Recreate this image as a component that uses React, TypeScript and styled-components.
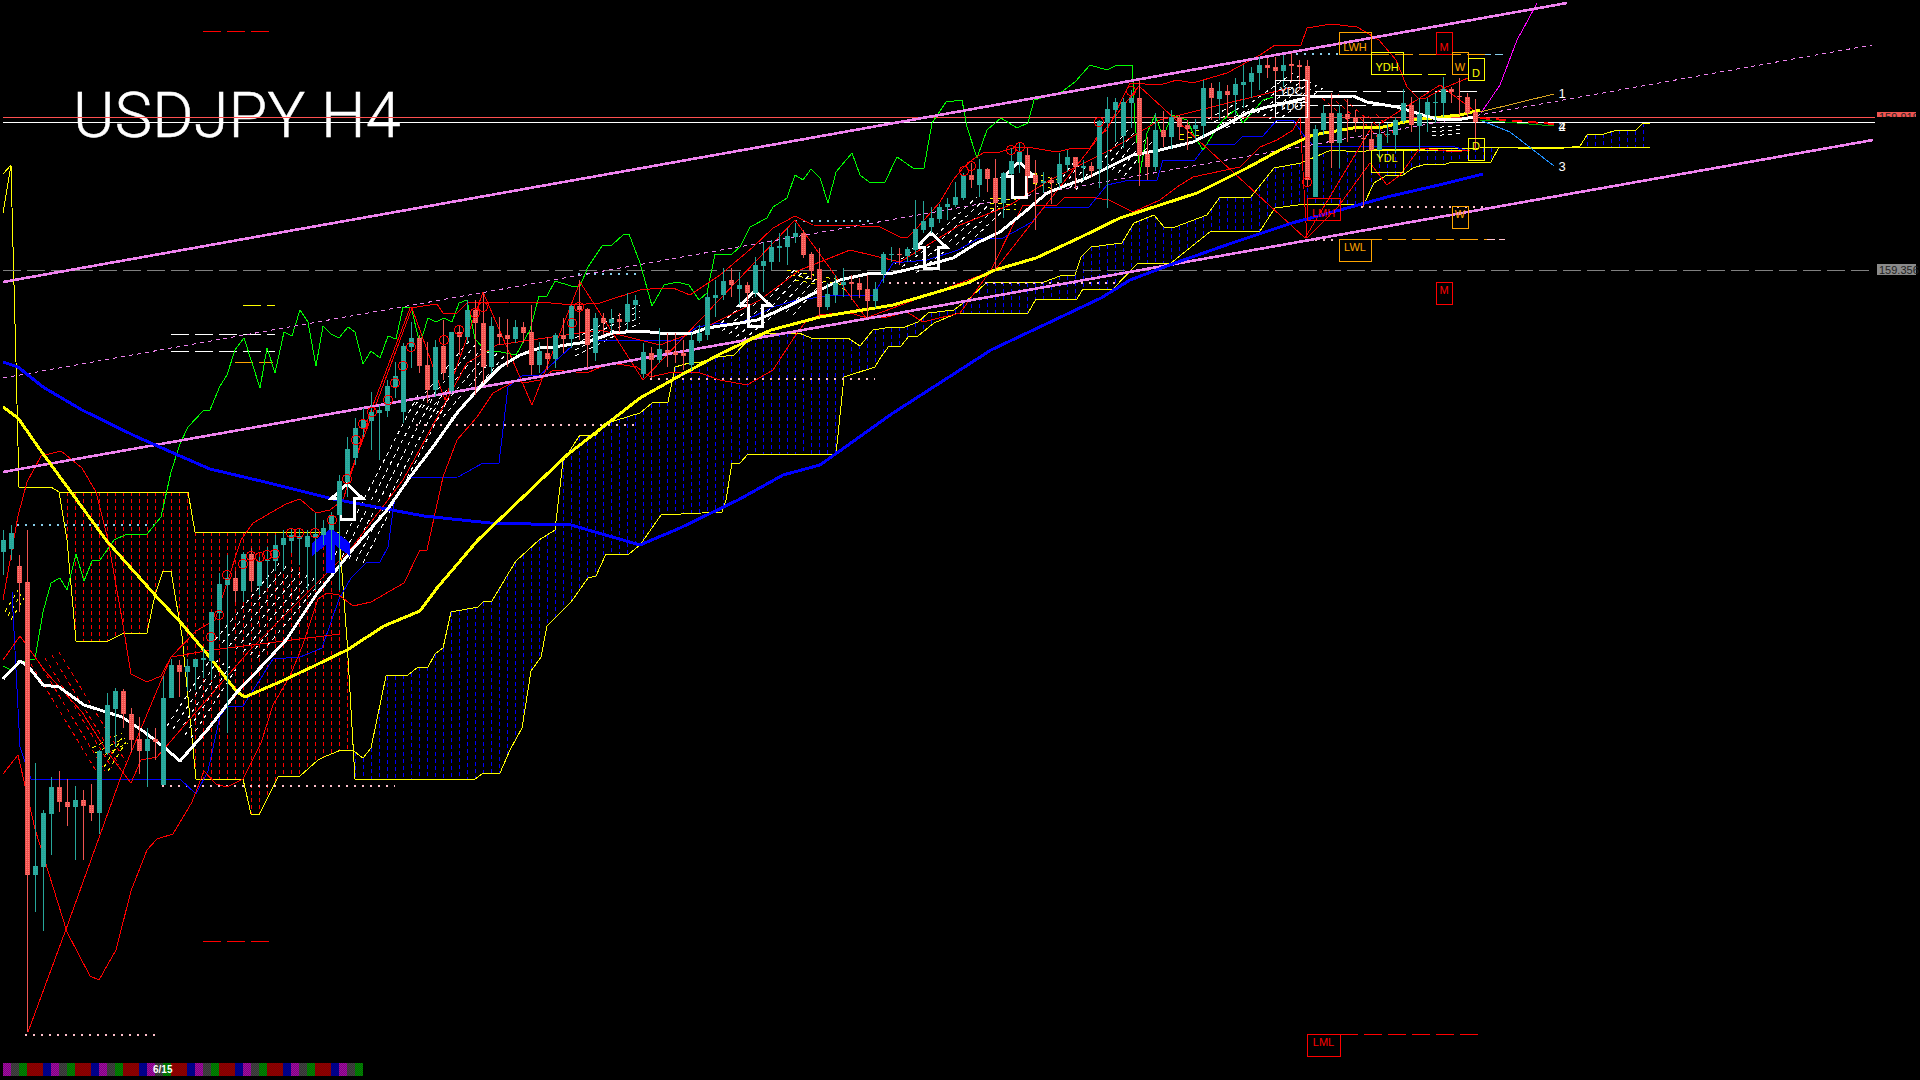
import styled, { createGlobalStyle } from 'styled-components';

const Global = createGlobalStyle`
  html, body { margin: 0; padding: 0; background: #000; }
`;

const Page = styled.div`
  position: relative;
  width: 1920px;
  height: 1080px;
  background: #000;
  overflow: hidden;
`;

const Title = styled.h1`
  position: absolute;
  left: 73px;
  top: 79px;
  margin: 0;
  font: 300 63px/74px Roboto, "Liberation Sans", sans-serif;
  letter-spacing: 0.2px;
  -webkit-text-stroke: 0.5px #fff;
  color: #fff;
  white-space: nowrap;
`;

const Chart = styled.svg`
  position: absolute;
  inset: 0;
  shape-rendering: crispEdges;
`;

const Trace = styled.polyline<{ $c: string; $w?: number; $dash?: string }>`
  fill: none;
  stroke: ${(p) => p.$c};
  stroke-width: ${(p) => p.$w ?? 1};
  stroke-dasharray: ${(p) => p.$dash ?? 'none'};
  stroke-linejoin: round;
`;

const Wick = styled.line<{ $c: string }>`
  stroke: ${(p) => p.$c};
  stroke-width: 1;
`;

const Ring = styled.circle`
  fill: none;
  stroke: #f00;
  stroke-width: 1;
`;

const Outline = styled.polygon`
  fill: none;
  stroke: #fff;
  stroke-width: 3;
  stroke-linejoin: miter;
`;

const BlueArrow = styled.polygon`
  fill: #00f;
`;

const LabelBox = styled.rect<{ $c: string }>`
  fill: none;
  stroke: ${(p) => p.$c};
  stroke-width: 1;
`;

const LabelText = styled.text<{ $c: string }>`
  fill: ${(p) => p.$c};
  font: 11px "Liberation Sans", Arial, sans-serif;
  text-anchor: middle;
`;

const FanNumber = styled.text`
  fill: #fff;
  font: 13px "Liberation Sans", Arial, sans-serif;
  text-anchor: middle;
`;

const TagText = styled.text`
  fill: #222;
  font: 11px "Liberation Sans", Arial, sans-serif;
`;

const Bar = styled.div`
  position: absolute;
  left: 3px;
  top: 1063px;
  display: flex;
  height: 13px;
`;

const Seg = styled.div<{ $c: string; $d: string; $w: number }>`
  width: ${(p) => p.$w}px;
  background: repeating-conic-gradient(${(p) => p.$c} 0 25%, ${(p) => p.$d} 0 50%) 0 0 / 2px 2px;
`;

const BarLabel = styled.span`
  position: absolute;
  left: 150px;
  top: 0;
  font: bold 10px/13px "Liberation Sans", Arial, sans-serif;
  color: #fff;
`;

const TEAL = '#26a69a';
const RED = '#ef5350';
const VIOLET = '#ee82ee';
const PINK = '#ffc0cb';
const SKY = '#87ceeb';
const ORANGE = '#ffa500';

// top, bottom, wick top, wick bottom, 1 = up. x = 3 + 8 * index
const candles: number[][] = [
  [540,552,530,575,1],[533,549,525,560,1],[566,583,555,612,0],[582,875,530,1032,0],[866,875,763,912,1],
  [813,867,810,931,1],[787,814,777,855,1],[787,802,771,812,0],[802,807,779,826,0],[800,807,786,860,1],
  [800,806,790,860,0],[805,813,784,821,0],[751,813,750,834,1],[705,753,693,755,1],[691,709,688,747,1],
  [691,714,689,728,0],[714,740,708,752,0],[739,751,717,774,0],[739,751,728,787,1],[739,742,728,760,0],
  [698,785,676,785,1],[665,698,659,698,1],[665,672,660,697,0],[666,672,659,691,1],[659,667,659,690,1],
  [658,660,648,678,1],[612,661,612,680,1],[584,613,573,640,1],[578,585,555,733,1],[578,591,571,602,0],
  [554,591,552,602,1],[554,581,548,592,0],[561,586,557,595,1],[560,561,547,588,1],[545,561,535,571,1],
  [538,545,530,571,1],[535,541,528,553,1],[536,539,528,565,1],[536,547,530,590,1],[534,538,513,590,1],
  [528,535,520,545,1],[515,530,512,560,1],[481,515,475,590,1],[449,482,437,497,1],[428,458,418,465,1],
  [420,428,408,437,1],[412,421,392,450,1],[410,413,405,460,1],[386,411,380,417,1],[376,387,362,398,1],
  [346,412,343,423,1],[338,347,322,368,1],[338,366,335,373,0],[365,390,342,403,0],[347,390,340,397,1],
  [346,373,320,380,0],[332,391,332,393,1],[332,337,325,355,0],[310,337,300,343,1],[310,323,300,395,0],
  [323,367,292,383,0],[326,367,317,373,1],[334,337,317,345,0],[335,339,319,367,0],[327,339,320,343,1],
  [327,333,322,343,0],[332,365,305,375,0],[351,365,342,373,1],[353,359,337,370,0],[335,359,333,368,1],
  [335,339,318,353,0],[306,339,305,348,1],[306,310,280,340,0],[309,345,308,368,0],[318,353,313,361,1],
  [318,323,313,335,0],[319,323,309,333,1],[319,322,313,332,0],[304,322,293,330,1],[300,305,295,320,1],
  [352,374,343,378,1],[353,360,347,378,0],[349,360,328,363,1],[350,353,333,367,0],[352,355,333,363,0],
  [353,356,340,370,0],[340,365,333,370,1],[333,341,325,343,1],[297,335,293,340,1],[295,298,280,317,1],
  [281,295,268,300,1],[280,285,268,297,0],[285,289,272,305,1],[285,293,282,307,0],[265,293,257,297,1],
  [261,266,242,292,1],[247,262,240,270,1],[246,248,233,262,1],[236,247,228,265,1],[233,237,223,243,1],
  [233,255,230,258,0],[254,271,252,280,0],[269,307,248,317,0],[294,307,283,310,1],[283,295,275,303,1],
  [282,285,268,297,1],[282,284,275,300,0],[283,290,278,298,0],[289,301,275,318,0],[289,301,282,308,1],
  [254,274,252,283,1],[254,255,247,262,1],[254,255,248,265,0],[249,256,247,262,1],[229,250,200,255,1],
  [221,230,201,233,1],[218,227,207,233,1],[207,219,204,223,1],[204,207,198,220,1],[197,205,182,207,1],
  [175,198,173,200,1],[175,180,163,188,0],[169,185,159,197,1],[169,179,168,192,0],[178,203,159,270,0],
  [173,203,172,218,1],[161,174,148,175,1],[152,162,143,173,1],[155,176,148,193,0],[175,183,160,230,0],
  [181,183,172,193,1],[180,183,177,204,0],[164,183,153,188,1],[157,165,150,172,1],[157,167,157,189,0],
  [166,168,160,180,1],[166,171,162,177,0],[121,169,120,188,1],[109,123,97,208,1],[102,110,98,142,1],
  [102,136,98,148,1],[98,103,90,128,1],[98,155,80,186,0],[154,167,137,180,0],[130,167,113,171,1],
  [130,137,111,147,0],[117,137,110,149,1],[117,127,115,140,0],[125,129,120,150,0],[125,129,119,140,1],
  [88,126,80,137,1],[88,98,83,120,0],[91,99,82,120,1],[91,95,85,118,0],[84,95,78,115,1],
  [82,85,65,108,1],[73,82,67,98,1],[65,73,57,90,1],[65,68,58,78,0],[67,71,57,82,0],
  [65,71,55,87,1],[64,66,53,82,0],[65,67,60,90,0],[66,180,60,187,0],[129,197,125,197,1],
  [113,130,105,135,1],[113,143,93,168,0],[113,143,105,168,1],[114,119,99,142,0],[117,122,110,132,0],
  [138,139,118,207,0],[139,151,123,172,0],[134,151,123,160,1],[134,135,123,143,1],[120,135,117,153,1],
  [103,121,89,123,1],[105,125,97,132,0],[114,126,98,150,1],[102,115,98,132,1],[102,103,93,123,1],
  [89,103,77,117,1],[89,92,87,103,0],[96,97,78,115,0],[97,113,93,117,0],[112,122,99,150,0],
];

// flat x,y lists, all in screen pixels
const fastMa = [3,679,20,661,28,666,43,685,59,687,84,705,100,710,122,717,143,731,165,748,180,761,208,729,237,692,261,667,286,640,316,595,341,564,352,550,387,510,410,477,433,447,457,413,480,387,500,367,520,355,540,348,553,347,587,342,613,333,640,331,660,333,690,334,707,328,740,323,757,320,780,310,807,297,820,290,840,280,867,274,893,273,927,265,953,258,977,243,1000,232,1027,210,1047,193,1067,185,1087,178,1107,168,1133,155,1160,150,1193,142,1220,128,1247,113,1267,107,1277,105,1310,97,1353,96,1367,102,1397,107,1423,115,1437,119,1457,120,1473,117];
const slowMa = [3,407,18,418,41,451,106,540,155,595,182,624,208,655,237,692,245,697,282,681,314,666,347,650,384,626,420,611,437,588,478,540,567,455,640,398,681,375,722,353,771,330,820,317,893,305,934,293,967,283,995,270,1036,258,1081,237,1120,218,1160,205,1197,193,1247,168,1280,150,1313,135,1353,128,1383,127,1413,120,1460,115,1480,110];
const blueMa = [3,362,18,367,43,387,82,410,135,436,180,456,210,469,265,482,333,499,424,516,490,523,571,525,640,545,680,528,738,500,783,475,820,465,893,413,991,350,1101,298,1130,280,1175,263,1232,243,1292,223,1340,210,1387,197,1439,185,1483,174];
const spanA = [59,492,67,540,76,641,106,642,124,633,147,633,155,595,163,571,171,571,182,636,196,779,243,779,251,814,259,815,278,777,300,776,318,760,324,757,341,750,351,750,355,752,363,758,371,748,386,676,408,675,418,667,428,667,435,654,443,648,451,612,478,607,484,601,492,601,508,574,516,561,539,540,555,530,563,461,580,435,596,435,604,424,640,413,652,403,668,402,675,367,689,363,701,362,718,357,734,355,750,338,762,333,799,333,811,338,848,338,860,346,873,330,885,328,905,327,918,322,928,313,954,310,971,297,987,282,1011,282,1028,283,1044,282,1060,276,1075,275,1081,257,1091,247,1122,243,1134,223,1154,215,1164,227,1175,227,1207,215,1220,197,1250,198,1274,168,1301,163,1331,150,1361,152,1371,150,1480,148,1509,147,1526,149,1565,148,1580,146,1587,135,1604,134,1617,130,1635,131,1643,123,1650,123];
const spanB = [11,165,12,207,16,362,19,487,51,487,59,492,188,492,195,532,282,532,339,532,347,640,355,779,475,779,482,774,500,773,510,750,522,728,531,671,541,657,547,626,571,602,588,578,596,576,606,554,629,554,640,545,661,515,722,512,726,500,732,463,740,463,748,454,836,454,844,377,875,367,881,357,889,346,901,346,909,336,918,336,934,323,958,313,1028,313,1036,299,1077,299,1083,289,1113,289,1138,263,1171,263,1211,231,1260,231,1275,208,1298,205,1364,204,1374,183,1387,175,1403,175,1413,168,1426,164,1446,164,1452,162,1491,162,1499,147,1650,147];
const chikou = [3,666,11,670,20,662,35,659,43,612,51,583,60,578,67,590,76,554,84,581,92,561,100,560,114,540,127,534,147,534,161,517,171,472,180,444,188,427,203,411,210,410,220,386,227,375,235,350,244,338,260,388,267,348,275,373,284,332,292,336,300,310,308,322,316,366,323,326,331,334,339,338,348,327,355,332,363,364,371,351,380,358,388,336,396,339,403,307,411,307,420,344,428,318,436,322,444,318,452,322,459,303,467,300,475,339,486,351,496,351,516,355,530,330,539,296,547,296,555,281,571,286,580,286,588,267,602,246,612,245,624,234,629,234,640,263,652,306,664,285,677,282,689,285,699,300,707,293,715,254,732,254,740,247,750,227,767,218,773,207,787,198,795,175,803,180,811,169,820,178,828,203,836,172,852,153,860,175,869,182,885,182,897,157,913,168,924,168,932,123,946,102,962,100,967,127,977,158,987,130,1001,118,1017,128,1028,123,1034,100,1060,93,1075,82,1090,65,1107,70,1115,66,1132,65,1133,82,1135,123,1140,173,1147,133,1155,115,1163,137,1172,115,1187,120,1195,137,1203,150,1217,128,1223,120,1235,110,1243,123,1263,100,1273,97];
const kijun = [12,592,20,747,31,779,180,779,196,794,208,771,220,716,227,707,243,706,261,678,273,659,300,657,322,648,339,599,351,578,367,562,380,562,388,547,395,497,410,478,458,477,483,463,499,463,508,387,523,375,540,375,560,357,573,345,597,340,680,340,697,327,720,323,740,323,773,307,797,300,813,298,833,295,873,295,893,263,927,260,958,250,979,238,1003,238,1032,222,1044,207,1089,207,1107,185,1130,180,1157,180,1163,160,1195,160,1207,144,1235,144,1243,136,1263,136,1277,120,1293,120,1305,137,1314,146,1452,146,1465,150];
const bandUpper = [3,600,18,516,27,482,41,456,61,451,82,468,96,492,108,540,122,619,131,674,147,682,161,676,171,657,196,631,215,620,241,540,253,523,286,504,300,499,316,513,330,510,343,500,370,413,410,308,437,304,443,313,457,313,467,303,510,302,540,302,573,305,600,303,640,290,660,288,673,288,690,295,720,275,753,247,773,228,795,216,813,225,860,226,880,227,900,237,907,238,917,228,940,202,953,180,963,168,972,160,983,153,1000,152,1017,147,1033,148,1057,152,1073,148,1090,148,1097,137,1107,130,1130,83,1160,85,1177,80,1193,83,1227,73,1260,55,1275,45,1301,45,1307,28,1331,24,1357,27,1379,40,1396,60,1407,87,1418,98,1426,98,1444,88,1468,78];
const bandLower = [3,774,18,755,35,829,67,932,90,976,99,980,116,950,131,891,147,850,157,839,173,834,192,802,204,771,216,784,227,787,243,779,261,743,273,705,290,676,302,647,318,599,327,593,339,595,353,606,371,602,404,583,420,550,427,550,443,477,457,440,477,417,493,393,517,380,523,383,540,380,553,370,587,373,610,363,637,367,650,377,673,372,700,373,720,380,747,385,773,370,797,333,807,320,820,315,847,312,867,318,887,317,907,312,923,322,960,313,991,270,1023,205,1057,205,1064,198,1089,197,1109,200,1133,212,1160,200,1177,187,1193,177,1240,167,1260,147,1277,140,1293,130,1300,117,1305,207,1307,238,1322,223,1338,207,1370,163,1387,185,1400,175,1411,160,1420,148,1455,152,1470,150];
const zigzag = [28,1032,65,932,122,774,171,657,212,650,340,634];
const zigzag2 = [347,482,412,308,445,400,483,292,532,405,580,282,643,380,795,220,866,318,995,270,1139,86,1305,238,1370,130,1440,85,1476,112];
const midRed = [3,660,20,636,45,671,82,712,106,750,131,783,141,760,157,757,250,650,350,550,403,480,467,363,497,345,600,330,660,345,700,330,760,300,800,270,850,250,900,262,960,225,1010,205,1050,180,1110,150,1160,120,1220,105,1290,88];
const magenta = [1481,113,1500,85,1517,40,1528,20,1537,3];

// x0, y0, x1, y1, rows, row dx, row dy, colour
const hatches: [number, number, number, number, number, number, number, string][] = [
  [335,555,418,395,5,7,2,'#fff'],[415,405,470,340,6,7,3,'#fff'],[167,726,212,657,5,6,3,'#fff'],[215,640,282,560,7,7,3,'#fff'],
  [575,338,640,305,4,0,6,'#fff'],[715,328,753,297,5,7,3,'#fff'],[765,303,797,267,5,7,3,'#fff'],[895,264,923,243,4,7,3,'#fff'],
  [935,236,977,197,5,7,3,'#fff'],[1058,184,1073,163,4,6,2,'#fff'],[1100,164,1130,127,5,6,3,'#fff'],[1208,119,1237,103,4,6,3,'#fff'],
  [1245,107,1293,73,6,6,3,'#fff'],[1432,128,1462,125,3,0,4,'#fff'],
  [31,664,98,774,5,7,-3,'#f00'],[1322,98,1350,122,3,8,-2,'#f00'],[1360,118,1380,140,3,8,-2,'#f00'],
  [5,612,18,590,3,3,4,'#ff0'],[92,748,122,733,3,3,5,'#ff0'],[104,767,122,738,2,4,4,'#ff0'],[787,270,840,280,3,4,5,'#ff0'],[990,198,1016,200,3,0,5,'#ff0'],[1033,173,1057,180,3,0,5,'#ff0'],[1180,135,1200,130,2,0,5,'#ff0'],
];

const rings = [[219,615],[211,637],[227,575],[243,564],[251,556],[260,557],[267,555],[275,554],[291,533],[299,533],[315,533],[332,520],[347,479],[356,440],[363,424],[372,412],[388,400],[395,383],[403,366],[411,347],[444,340],[459,330],[475,313],[483,307],[572,323],[579,307],[964,171],[971,166],[1011,150],[1020,147],[1099,122],[1131,91],[1307,182]];

const arrows = [[347,484],[755,291],[931,233],[1019,162]];

// dashed or dotted horizontals: x0, x1, y, colour, dash
const levels: [number, number, number, string, string, number][] = [
  [3,1869,270,'#808080','18 6',1],
  [203,269,31,'#f00','18 6',1],[203,269,941,'#f00','18 6',1],
  [243,275,305,'#ff0','18 6',1],[171,275,334,'#fff','18 6',1],[171,275,351,'#fff','18 6',1],[235,273,362,ORANGE,'18 6',1],
  [17,155,524,SKY,'2 6',2],[578,640,273,SKY,'2 6',2],[795,875,220,SKY,'2 6',2],[1296,1338,53,SKY,'2 6',2],[1483,1505,54,SKY,'8 4',1],
  [416,637,424,PINK,'2 6',2],[162,395,785,PINK,'2 6',2],[25,155,1034,PINK,'2 6',2],[650,875,378,PINK,'2 6',2],[889,1115,282,PINK,'2 6',2],[1361,1483,206,PINK,'2 6',2],[1307,1333,239,PINK,'2 6',2],[1487,1505,239,PINK,'8 4',1],
  [1371,1485,54,ORANGE,'18 6',1],[1340,1487,239,ORANGE,'18 6',1],[1404,1450,74,'#ff0','18 6',1],[1315,1483,91,'#fff','18 6',1],[1300,1420,105,'#fff','18 6',1],
  [1404,1465,150,'#ff0','60 0',1],[1340,1478,1034,'#f00','18 6',1],
];

// left, top, width, text, colour, distance of the baseline from the top
const labels: [number, number, number, string, string, number][] = [
  [1339,32,32,'LWH',ORANGE,19],[1371,52,32,'YDH','#ff0',19],[1436,32,16,'M','#f00',19],[1452,52,16,'W',ORANGE,19],[1468,58,16,'D','#ff0',19],
  [1275,80,32,'YDC','#fff',15],[1275,95,32,'YDO','#fff',15],[1307,198,33,'LMH','#f00',19],[1339,239,32,'LWL',ORANGE,12],[1452,206,16,'W',ORANGE,12],
  [1436,282,16,'M','#f00',12],[1468,138,16,'D','#ff0',12],[1371,150,32,'YDL','#ff0',12],[1307,1034,33,'LML','#f00',12],
];

const segs: [string, string, number][] = [['#800080', '#a010a0', 8], ['#333', '#444', 8], ['#060', '#080', 8], ['#800000', '#900000', 16], ['#000080', '#000090', 8]];
const barCells = Array.from({ length: 38 }, (_, i) => segs[i % 5]);

const interp = (line: number[], x: number) => {
  for (let i = 0; i < line.length - 2; i += 2) {
    const [x0, y0, x1, y1] = [line[i], line[i + 1], line[i + 2], line[i + 3]];
    if (x >= x0 && x <= x1) return y0 + ((y1 - y0) * (x - x0)) / (x1 - x0 || 1);
  }
  return null;
};

const cloud = Array.from({ length: 206 }, (_, i) => {
  const x = 3 + 8 * i;
  const a = interp(spanA, x);
  const b = interp(spanB, x);
  return a === null || b === null ? null : { x, a, b };
}).filter(Boolean) as { x: number; a: number; b: number }[];

const arrowPoints = (cx: number, t: number) =>
  `${cx},${t} ${cx + 15},${t + 14} ${cx + 7},${t + 14} ${cx + 7},${t + 35} ${cx - 7},${t + 35} ${cx - 7},${t + 14} ${cx - 15},${t + 14}`;

export default function App() {
  return (
    <Page>
      <Global />
      <Title>USDJPY H4</Title>
      <Chart width={1920} height={1080} viewBox="0 0 1920 1080">
        <defs>
          <pattern id="teal" width="2" height="2" patternUnits="userSpaceOnUse">
            <rect width="2" height="2" fill={TEAL} />
            <rect width="1" height="1" fill="#35b0a4" />
          </pattern>
          <pattern id="red" width="2" height="2" patternUnits="userSpaceOnUse">
            <rect width="2" height="2" fill={RED} />
            <rect width="1" height="1" fill="#ff7f78" />
          </pattern>
        </defs>

        {cloud.map((k) => (
          <Wick
            key={k.x}
            $c={k.a < k.b ? '#00f' : '#f00'}
            x1={k.x + 0.5}
            x2={k.x + 0.5}
            y1={Math.min(k.a, k.b)}
            y2={Math.max(k.a, k.b)}
            strokeDasharray="4 3"
          />
        ))}
        <Trace points="3,174 11,165 3,213" $c="#ff0" />
        <Trace points={spanA.join(' ')} $c="#ff0" />
        <Trace points={spanB.join(' ')} $c="#ff0" />

        <Trace points="3,117.5 1875,117.5" $c="#ff5050" />
        <Trace points="3,122.5 1875,122.5" $c="#fff" />
        {levels.map(([x0, x1, y, c, dash, w]) => (
          <Trace key={`${x0}-${y}`} points={`${x0},${y + 0.5} ${x1},${y + 0.5}`} $c={c} $dash={dash} $w={w} />
        ))}

        {hatches.map(([x0, y0, x1, y1, n, dx, dy, c], i) =>
          Array.from({ length: n }, (_, r) => (
            <Trace
              key={`${i}-${r}`}
              points={`${x0 + r * dx},${y0 + r * dy} ${x1 + r * dx},${y1 + r * dy}`}
              $c={c}
              $dash="4 4"
            />
          )),
        )}

        <Trace points={kijun.join(' ')} $c="#00f" />
        <Trace points={chikou.join(' ')} $c="#0f0" />
        <Trace points={bandUpper.join(' ')} $c="#f00" />
        <Trace points={bandLower.join(' ')} $c="#f00" />
        <Trace points={zigzag.join(' ')} $c="#f00" />
        <Trace points={zigzag2.join(' ')} $c="#f00" />
        <Trace points={midRed.join(' ')} $c="#f00" />
        <Trace points={magenta.join(' ')} $c="#f0f" />

        <Trace points="3,282 1567,3" $c={VIOLET} $w={2.6} />
        <Trace points="3,472 1873,140" $c={VIOLET} $w={2.6} />
        <Trace points="3,378 1872,45" $c={VIOLET} $dash="4 4" />

        <Trace points="1480,112 1554,94" $c="#daa520" />
        <Trace points="1480,120 1510,132 1554,166" $c="#1e90ff" />
        <Trace points="1480,120 1554,126" $c="#0a0" />
        <Trace points="1480,118 1554,124" $c="#f00" $w={2} $dash="10 6" />

        <Trace points={blueMa.join(' ')} $c="#00f" $w={3} />
        <Trace points={slowMa.join(' ')} $c="#ff0" $w={3} />
        <Trace points={fastMa.join(' ')} $c="#fff" $w={3} />

        <BlueArrow points="331,528 350,543 350,556 335,545 335,573 326,573 326,545 312,556 312,543" />
        {arrows.map(([cx, t]) => (
          <Outline key={cx} points={arrowPoints(cx, t)} />
        ))}

        {candles.map(([top, bot, wt, wb, up], i) => {
          const x = 3 + 8 * i;
          return (
            <g key={x}>
              <Wick $c={up ? TEAL : RED} x1={x + 0.5} x2={x + 0.5} y1={wt} y2={wb} />
              <rect x={x - 2} y={top} width={5} height={Math.max(bot - top, 1)} fill={up ? 'url(#teal)' : 'url(#red)'} />
            </g>
          );
        })}

        {labels.map(([x, y, w, text, c, base]) => (
          <g key={`${text}-${y}`}>
            <LabelBox $c={c} x={x + 0.5} y={y + 0.5} width={w} height={22} />
            <LabelText $c={c} x={x + w / 2} y={y + base}>
              {text}
            </LabelText>
          </g>
        ))}

        {rings.map(([x, y]) => (
          <Ring key={`${x}-${y}`} cx={x} cy={y} r={4.5} />
        ))}

        <FanNumber x={1562} y={98}>1</FanNumber>
        <FanNumber x={1562} y={131}>2</FanNumber>
        <FanNumber x={1562} y={131}>4</FanNumber>
        <FanNumber x={1562} y={171}>3</FanNumber>

        <svg x={1877} y={112} width={39} height={5}>
          <rect width={39} height={5} fill={RED} />
          <TagText x={2} y={9}>159.919</TagText>
        </svg>
        <rect x={1877} y={264} width={39} height={11} fill="#8a8a8a" />
        <TagText x={1879} y={274}>159.356</TagText>
      </Chart>
      <Bar>
        {barCells.map(([c, d, w], i) => (
          <Seg key={i} $c={c} $d={d} $w={w} />
        ))}
        <BarLabel>6/15</BarLabel>
      </Bar>
    </Page>
  );
}
